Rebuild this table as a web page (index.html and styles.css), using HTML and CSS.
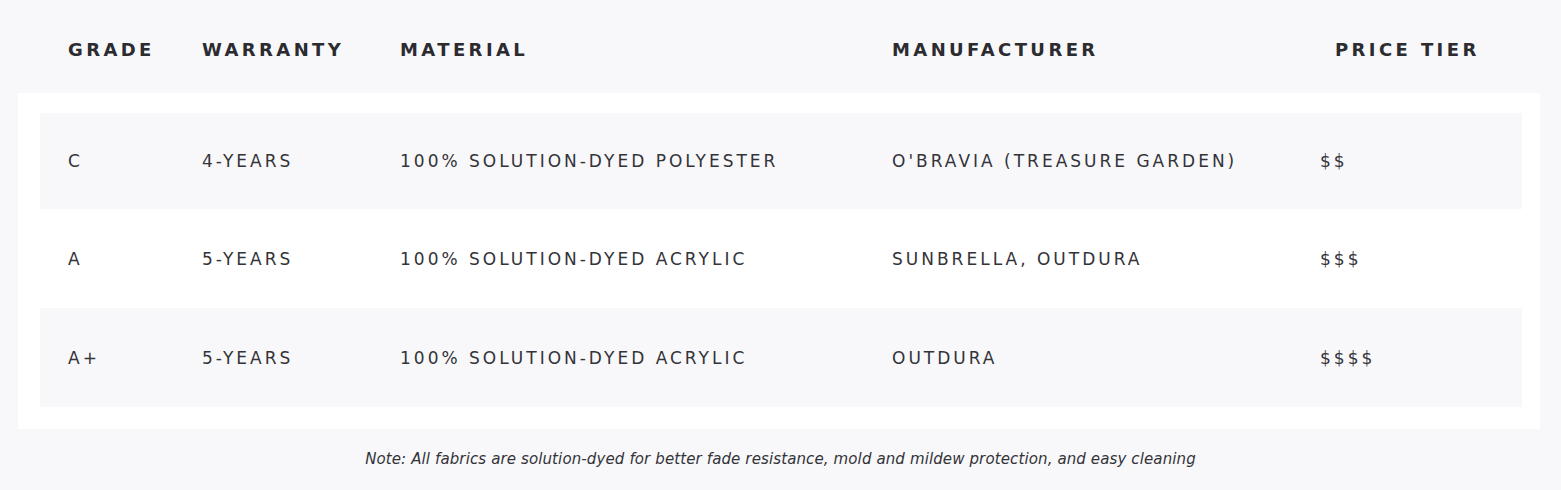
FILE: index.html
```html
<!DOCTYPE html>
<html lang="en">
<head>
<meta charset="utf-8">
<title>Fabric Grades</title>
<link rel="stylesheet" href="styles.css">
</head>
<body>
<div class="page">
  <div class="head">
    <div class="hcell">Grade</div>
    <div class="hcell">Warranty</div>
    <div class="hcell">Material</div>
    <div class="hcell">Manufacturer</div>
    <div class="hcell">Price Tier</div>
  </div>
  <div class="card">
    <div class="row shade first">
      <div class="cell">C</div>
      <div class="cell">4-Years</div>
      <div class="cell">100% Solution-Dyed Polyester</div>
      <div class="cell">O'Bravia (Treasure Garden)</div>
      <div class="cell">$$</div>
    </div>
    <div class="row">
      <div class="cell">A</div>
      <div class="cell">5-Years</div>
      <div class="cell">100% Solution-Dyed Acrylic</div>
      <div class="cell">Sunbrella, Outdura</div>
      <div class="cell">$$$</div>
    </div>
    <div class="row shade">
      <div class="cell">A+</div>
      <div class="cell">5-Years</div>
      <div class="cell">100% Solution-Dyed Acrylic</div>
      <div class="cell">Outdura</div>
      <div class="cell">$$$$</div>
    </div>
  </div>
  <p class="note">Note: All fabrics are solution-dyed for better fade resistance, mold and mildew protection, and easy cleaning</p>
</div>
</body>
</html>
```
FILE: styles.css
```css
html, body {
  margin: 0;
  padding: 0;
}
body {
  background: #f8f8fa;
  font-family: "DejaVu Sans", "Open Sans", sans-serif;
  color: #333338;
}
.page {
  width: 1561px;
  height: 490px;
  overflow: hidden;
}
.head {
  display: grid;
  grid-template-columns: 134px 198px 492px 443px 1fr;
  padding: 39px 0 0 68px;
  height: 54px;
}
.hcell {
  font-size: 18px;
  line-height: 22px;
  font-weight: 700;
  letter-spacing: 3.4px;
  text-transform: uppercase;
  color: #2b2b30;
}
.card {
  background: #ffffff;
  margin: 0 21px 0 18px;
  padding: 20px 18px 22px 22px;
}
.row {
  display: grid;
  grid-template-columns: 134px 198px 492px 428px 1fr;
  align-items: center;
  padding-left: 28px;
  height: 99px;
}
.row.first {
  height: 96px;
}
.row.shade {
  background: #f8f8fa;
}
.cell {
  font-size: 17px;
  line-height: 20px;
  letter-spacing: 3px;
  text-transform: uppercase;
  color: #333338;
}
.note {
  margin: 20px 0 0;
  text-align: center;
  font-style: italic;
  font-size: 15px;
  line-height: 20px;
  letter-spacing: 0.12px;
  color: #333338;
}
```
